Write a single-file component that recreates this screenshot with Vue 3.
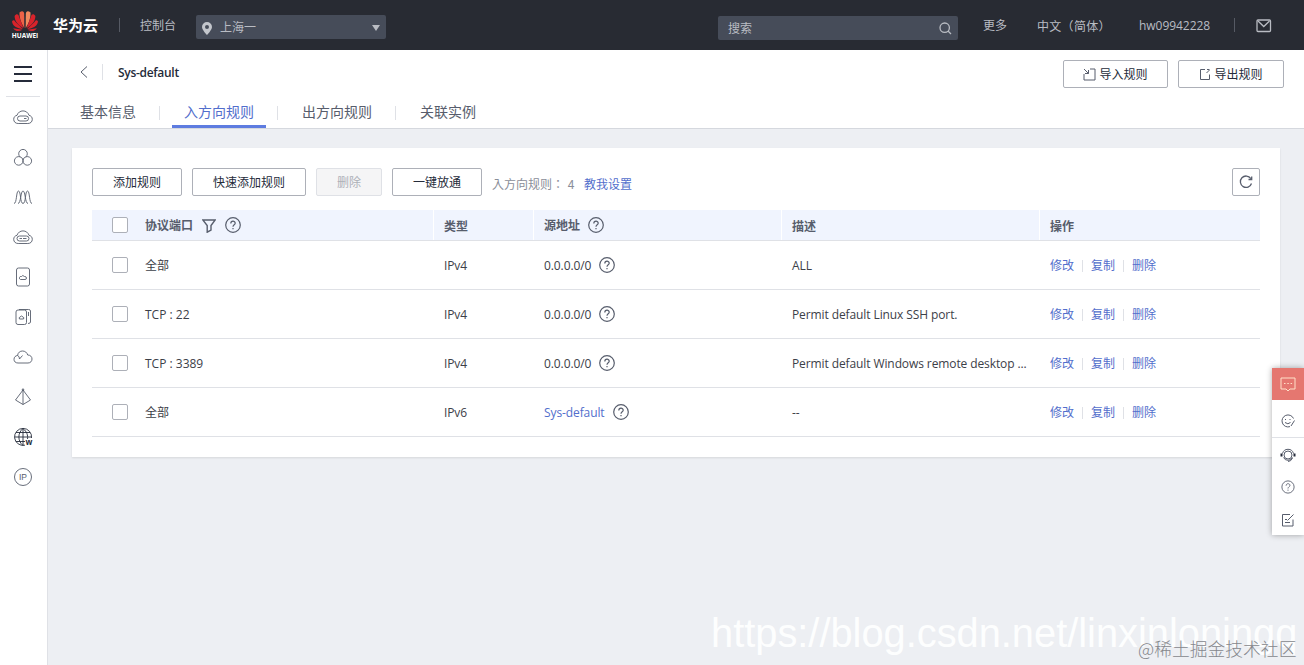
<script setup>
import { ref } from 'vue'

const tabs = ['基本信息', '入方向规则', '出方向规则', '关联实例']
const activeTab = ref(1)
const selected = ref([])

const rules = [
  { port: '全部', type: 'IPv4', source: '0.0.0.0/0', desc: 'ALL' },
  { port: 'TCP : 22', type: 'IPv4', source: '0.0.0.0/0', desc: 'Permit default Linux SSH port.' },
  { port: 'TCP : 3389', type: 'IPv4', source: '0.0.0.0/0', desc: 'Permit default Windows remote desktop ...' },
  { port: '全部', type: 'IPv6', source: 'Sys-default', link: true, desc: '--' },
]
const actions = ['修改', '复制', '删除']

const cloud = 'M5.2 16.5C2.5 16.5.7 14.8.7 12.300.7 10.200 2 8.700 4 8.300 5 5.500 7.200 3.900 10 3.900S15 5.500 16 8.300C18 8.700 19.300 10.200 19.300 12.300 19.300 14.800 17.500 16.500 14.800 16.500Z'
const sideIcons = [
  [cloud, 'M7 9H13Q15.500 9 15.500 11.500T13 14H7Q4.500 14 4.500 11.500T7 9M11 11.500H13.500'],
  ['M7 9.800A4.300 4.300 0 1 1 13 9.800M10 13.800A4.300 4.300 0 1 1 7 9.800Q10 10.500 10 13.800M13 9.800A4.300 4.300 0 1 1 10 13.800Q10 10.500 13 9.800'],
  ['M1 16.500C4 16.500 3 4 5.500 4S7 16.500 10 16.500 12 4 14.500 4 16 16.500 19 16.500', 'M5 16.500C8 16.500 7.500 4 10 4S12 16.500 15 16.500'],
  [cloud, 'M6.500 9H13.500Q16 9 16 11.500T13.500 14H6.500Q4 14 4 11.500T6.500 9M6.500 11.500H9M10 11.500H13.500'],
  ['M5.500 1H14.500Q16.500 1 16.500 3V17Q16.500 19 14.500 19H5.500Q3.500 19 3.500 17V3Q3.500 1 5.500 1', 'M7.500 12.500Q6 12 6.500 10.500T8.500 9.500Q9.500 7.500 11.500 9.500 13.500 9.500 13.500 11T12 12.500Z'],
  ['M5 3H11.500Q13.500 3 13.500 5V15.500Q13.500 17.500 11.500 17.500H5Q3 17.500 3 15.500V5Q3 3 5 3', 'M6.500 12Q5.500 10.500 7 10 8.500 8 10 10 11.500 10.500 10.500 12ZM6 2.500H15.500Q17.500 2.500 17.500 4V15Q17.500 16.500 15 16.500M15.500 5V9'],
  ['M5 16C2.500 16 1 14.500 1 12.300S2.500 8.700 4.500 8.500C5 5.500 7 4 9.500 4S14 5.500 14.700 8C17.500 8 19 9.800 19 12S17.500 16 15 16Z', 'M4.500 8.500Q6.500 9 6.500 12L9.500 8.500'],
  ['M10 3 2.500 13 10 17.500 17.500 13ZM10 3V17.500', 'M9.300 2H10.700V3.500H9.300Z'],
]
</script>

<template>
  <div class="page">
    <header class="topbar">
      <div class="logo">
        <svg width="28" height="22" viewBox="0 0 28 22">
          <g fill="#d9232b">
            <path d="M13.300 18C9.500 12 8.300 7 8.500 2.500 11 .5 13 1 13.200 4Z" fill="#ee6247" />
            <path d="M14.700 18C18.500 12 19.700 7 19.500 2.500 17 .5 15 1 14.800 4Z" fill="#f28b5f" />
            <path d="M12.500 18.300C7 15 3.500 11 3.600 6 5 3.800 7.500 3.700 8 6.500Z" />
            <path d="M15.500 18.300C21 15 24.500 11 24.400 6 23 3.800 20.500 3.700 20 6.500Z" />
            <path d="M11.800 19C6 18.500 1.500 16 1 11.500 2 9.500 3.500 10 4.500 12Z" />
            <path d="M16.200 19C22 18.500 26.500 16 27 11.500 26 9.500 24.500 10 23.500 12Z" />
            <path d="M11.500 19.700C8 22 4 21.500 2.200 18.300Z" />
            <path d="M16.500 19.700C20 22 24 21.500 25.800 18.300Z" />
          </g>
        </svg>
        <b>HUAWEI</b>
      </div>
      <strong class="brand">华为云</strong>
      <i class="bar"></i>
      <span class="console">控制台</span>
      <div class="region">
        <svg width="10" height="13" viewBox="0 0 10 13"><path d="M5 0A5 5 0 0 0 0 5C0 8 5 13 5 13S10 8 10 5A5 5 0 0 0 5 0M5 3A2 2 0 1 1 5 7 2 2 0 1 1 5 3" fill="#c3c6cc" fill-rule="evenodd" /></svg>
        <span>上海一</span>
        <i class="caret"></i>
      </div>
      <div class="search">
        <span>搜索</span>
        <svg width="13" height="13" viewBox="0 0 13 13" class="line"><circle cx="5.700" cy="5.700" r="4.700" /><path d="M9 9 12 12" /></svg>
      </div>
      <span class="more">更多</span>
      <span class="lang">中文（简体）</span>
      <span class="user">hw09942228</span>
      <i class="bar bar-user"></i>
      <svg width="16" height="14" viewBox="0 0 16 14" class="line mail"><rect x="1" y="1" width="13.500" height="11.500" rx="1" /><path d="M2 2 7.750 7.500 13.500 2" /></svg>
    </header>

    <div class="body">
      <aside class="sidebar">
        <div class="burger"><i></i><i></i><i></i></div>
        <div v-for="(paths, i) in sideIcons" :key="i" class="side-item">
          <svg width="20" height="20" viewBox="0 0 20 20"><path v-for="d in paths" :key="d" :d="d" /></svg>
        </div>
        <div class="side-item">
          <svg class="globe" width="20" height="20" viewBox="0 0 20 20">
            <path d="M12 18.200A8.500 8.500 0 1 1 18.500 11M10 1.500V18.500M1.500 10H18.500M3 5.500H17M3 14.500H12M10 1.500C4.500 6 4.500 14 10 18.500M10 1.500C14 5 15 8 14.500 12" />
            <text x="12.500" y="18" class="globe-w">w</text>
          </svg>
        </div>
        <div class="side-item">
          <svg width="20" height="20" viewBox="0 0 20 20"><circle cx="10" cy="10" r="8.500" /><text x="10" y="13" text-anchor="middle" class="ip">IP</text></svg>
        </div>
      </aside>

      <main class="main">
        <div class="heading">
          <div class="title-row">
            <svg class="back" width="8" height="12" viewBox="0 0 8 12"><path d="M7 .5 1 6 7 11.500" /></svg>
            <i class="divider"></i>
            <h1>Sys-default</h1>
            <button class="btn io import">
              <svg width="13" height="13" viewBox="0 0 13 13"><path d="M1 6V12H12V1H7M1 1 5.500 5.500M5.500 2V5.500H2" /></svg>导入规则
            </button>
            <button class="btn io">
              <svg width="12" height="13" viewBox="0 0 12 13"><path d="M6 1.500H1.500V11.500H10.500V6.500M7.500 5 10.500 2M8 1.500H10.500" /></svg>导出规则
            </button>
          </div>
          <nav class="tabs">
            <a v-for="(tab, i) in tabs" :key="tab" :class="{ active: i === activeTab }" @click="activeTab = i"><span>{{ tab }}</span></a>
          </nav>
        </div>

        <section class="card">
          <div class="toolbar">
            <button class="btn">添加规则</button>
            <button class="btn wide">快速添加规则</button>
            <button class="btn small" disabled>删除</button>
            <button class="btn">一键放通</button>
            <span class="count">入方向规则： 4</span>
            <a class="teach">教我设置</a>
            <button class="btn refresh">
              <svg width="14" height="14" viewBox="0 0 14 14"><path d="M12.500 8.500A5.700 5.700 0 1 1 11.800 3.500M12.700 1.500V4.500H9.500" /></svg>
            </button>
          </div>

          <div class="row head">
            <div class="check"><i></i></div>
            <div class="cell port">协议端口
              <svg class="funnel" width="14" height="14" viewBox="0 0 14 14"><path d="M.8 1H13.200L9 6.500V11L5.200 13.200V6.500Z" /></svg>
              <span class="help"><svg viewBox="0 0 16 16"><circle cx="8" cy="8" r="7.300" /><path d="M5.800 6.500C5.800 3.500 10.200 3.500 10.200 6.200 10.200 7.800 8 7.800 8 9.700M8 11V12.300" /></svg></span>
            </div>
            <div class="cell low">类型</div>
            <div class="cell">源地址
              <span class="help"><svg viewBox="0 0 16 16"><circle cx="8" cy="8" r="7.300" /><path d="M5.800 6.500C5.800 3.500 10.200 3.500 10.200 6.200 10.200 7.800 8 7.800 8 9.700M8 11V12.300" /></svg></span>
            </div>
            <div class="cell low">描述</div>
            <div class="cell low">操作</div>
          </div>
          <div v-for="(rule, i) in rules" :key="i" class="row">
            <label class="check"><input v-model="selected" type="checkbox" :value="i" /><i></i></label>
            <div class="cell port">{{ rule.port }}</div>
            <div class="cell narrow">{{ rule.type }}</div>
            <div class="cell narrow"><span :class="{ link: rule.link }">{{ rule.source }}</span>
              <span class="help"><svg viewBox="0 0 16 16"><circle cx="8" cy="8" r="7.300" /><path d="M5.800 6.500C5.800 3.500 10.200 3.500 10.200 6.200 10.200 7.800 8 7.800 8 9.700M8 11V12.300" /></svg></span>
            </div>
            <div class="cell narrow">{{ rule.desc }}</div>
            <div class="cell actions"><a v-for="action in actions" :key="action">{{ action }}</a></div>
          </div>
        </section>
      </main>
    </div>

    <div class="float-menu">
      <div class="chat"><svg width="16" height="15" viewBox="0 0 16 15"><path d="M1 1H15V12H10L8 14 6 12H1ZM4 6.500H5.500M7.300 6.500H8.800M10.600 6.500H12.100" /></svg></div>
      <div class="smile"><svg width="14" height="14" viewBox="0 0 14 14"><path d="M12.500 4.500A6 6 0 1 0 9 12.600M4.500 5V6M9 5V6M4 8.500Q7 11 9.500 8.500M13.500 6.500 10 12" /></svg></div>
      <div class="agent"><svg width="16" height="14" viewBox="0 0 16 14"><path d="M2.500 5.500A5.700 5.700 0 0 1 13.500 5.500M3.500 9.500A5 5 0 0 0 12.500 9.500M12.500 10Q11 13.500 8 13.500" /><circle cx="8" cy="7" r="4" /><path d="M1.500 5.500V8.500M14.500 5.500V8.500" class="ears" /></svg></div>
      <div class="faq"><svg width="14" height="14" viewBox="0 0 16 16"><circle cx="8" cy="8" r="7" /><path d="M5.800 6.500C5.800 3.500 10.200 3.500 10.200 6.200 10.200 7.800 8 7.800 8 9.700M8 11V12.300" /></svg></div>
      <div class="note"><svg width="14" height="14" viewBox="0 0 14 14"><path d="M9 1.500H1.500V13H12V6.500M4 6.500H6M4 9.500H9M6.500 7.500 12.500 1.500" /></svg></div>
    </div>

    <div class="blog-mark">https://blog.csdn.net/linxinloningq</div>
    <div class="site-mark">@稀土掘金技术社区</div>
  </div>
</template>

<style>
body {
  margin: 0;
  overflow: hidden;
}
</style>

<style scoped>
.page {
  position: relative;
  width: 1304px;
  height: 665px;
  display: flex;
  flex-direction: column;
  overflow: hidden;
  background: #edeff3;
  color: #3c4048;
  font: 12px/18px "Open Sans", "Noto Sans CJK SC", sans-serif;
}

* {
  box-sizing: border-box;
}

svg {
  flex: none;
  fill: none;
  stroke: #575d6c;
}

.topbar {
  flex: none;
  display: flex;
  align-items: center;
  height: 50px;
  background: #282b33;
  color: #b9bcc3;

  span {
    padding-top: 2px;
  }

  .logo {
    width: 28px;
    margin: -2px 0 0 11px;
    display: flex;
    flex-direction: column;
    align-items: center;

    b {
      color: #fff;
      font: bold 6.500px/7px "Open Sans", sans-serif;
    }

    svg {
      stroke: none;
    }
  }

  .brand {
    width: 46px;
    margin: -1px 0 0 14px;
    color: #fff;
    font-size: 15px;
    white-space: nowrap;
  }

  .bar {
    width: 1px;
    height: 14px;
    margin-left: 20px;
    background: #565a64;
  }

  .console {
    width: 56px;
    margin-left: 20px;
  }

  .region,
  .search {
    display: flex;
    align-items: center;
    background: #464c59;
    border-radius: 2px;
  }

  .region {
    width: 190px;
    height: 24px;
    margin-top: 4px;
    padding: 0 6px;
    gap: 8px;

    svg {
      margin-top: 2px;
      stroke: none;
    }
  }

  .caret {
    margin: 2px 0 0 auto;
    border: 4px solid transparent;
    border-top: 6px solid #b9bcc3;
    border-bottom: 0;
  }

  .search {
    width: 240px;
    height: 24px;
    margin: 6px 0 0 332px;
    padding: 0 6px 0 10px;
    justify-content: space-between;
  }

  .line {
    stroke: #b9bcc3;
    stroke-width: 1.300;
  }

  .more {
    margin-left: 25px;
  }

  .lang {
    width: 78px;
    margin-left: 30px;
    font-family: "Noto Sans CJK TC", sans-serif;
    letter-spacing: 0.3px;
    white-space: nowrap;
  }

  .user {
    width: 71px;
    margin-left: 24px;
    letter-spacing: -0.05px;
  }

  .bar-user {
    margin-left: 24px;
  }

  .mail {
    margin: 1px 0 0 21px;
  }
}

.body {
  flex: 1;
  display: flex;
  min-height: 0;
}

.sidebar {
  width: 48px;
  padding: 0 7px 0 6px;
  background: #fff;
  border-right: 1px solid #dfe1e6;

  .burger {
    height: 47px;
    padding: 16px 8px 0;
    border-bottom: 1px solid #dfe1e6;

    i {
      display: block;
      height: 2px;
      margin-bottom: 5px;
      background: #252b3a;
    }
  }

  .side-item {
    display: flex;
    align-items: center;
    justify-content: center;
    height: 40px;
  }

  svg {
    stroke-width: 0.900;
  }

  text {
    stroke: none;
    fill: #575d6c;
  }

  .globe {
    stroke: #252b3a;
  }

  .globe-w {
    font: bold 8px "Open Sans", sans-serif;
    fill: #252b3a;
  }

  .ip {
    font: 8.500px "Liberation Sans", sans-serif;
  }
}

.main {
  flex: 1;
}

.heading {
  height: 79px;
  padding-right: 20px;
  background: #fff;
  border-bottom: 1px solid #d5d8de;
}

.title-row {
  display: flex;
  align-items: center;
  height: 46px;

  .back {
    margin: -2px 0 0 32px;
  }

  .divider {
    width: 1px;
    height: 16px;
    margin: -2px 15px 0 14px;
    background: #dfe1e6;
  }

  h1 {
    margin: 0 auto 0 0;
    color: #252b3a;
    font-size: 12px;
    font-weight: 600;
    letter-spacing: -0.3px;
  }
}

.btn {
  display: flex;
  align-items: center;
  justify-content: center;
  width: 90px;
  height: 28px;
  margin: 0 10px 0 0;
  padding: 2px 0 0;
  border: 1px solid #adb0b8;
  border-radius: 2px;
  background: #fff;
  color: #252b3a;
  font: inherit;

  &.wide {
    width: 114px;
  }

  &.small {
    width: 66px;
  }

  &:disabled {
    border-color: #dfe1e6;
    background: #f5f5f6;
    color: #adb0b8;
  }

  &.io {
    width: 106px;
    margin: 2px 0 0 10px;
    gap: 3px;

    svg {
      margin-top: -2px;
    }
  }

  &.import {
    width: 105px;
  }

  &.refresh {
    width: 28px;
    margin: 0 0 0 auto;
    padding: 0;

    svg {
      stroke-width: 1.300;
    }
  }
}

.tabs {
  display: flex;
  height: 32px;
  padding-left: 20px;
  font-size: 14px;
  line-height: 32px;

  a {
    display: flex;
    position: relative;
    padding: 0 12px;
    color: #575d6c;
  }

  a + a {
    margin-left: 24px;
  }

  /* thin separator between neighbouring tabs */
  a + a::before {
    content: "";
    position: absolute;
    left: -13px;
    top: 10px;
    width: 1px;
    height: 14px;
    background: #dfe1e6;
  }

  .active {
    color: #526ecc;
    border-bottom: 3px solid #5e7ce0;
  }
}

.card {
  width: 1208px;
  height: 309px;
  margin: 19px 0 0 24px;
  padding: 20px;
  background: #fff;
  box-shadow: 0 1px 2px #0000001a;
}

.toolbar {
  display: flex;
  height: 42px;

  .teach {
    margin-top: 8px;
  }

  .count {
    width: 92px;
    margin-top: 7px;
    color: #8a8e99;
    font-family: "Noto Sans CJK TC", sans-serif;
    word-spacing: 1px;
    white-space: nowrap;
  }
}

.teach,
.link,
.actions a {
  color: #526ecc;
}

.row {
  display: grid;
  grid-template-columns: 43px 298px 100px 248px 258px 1fr;
  align-items: center;
  height: 49px;
  border-bottom: 1px solid #dfe1e6;
}

.check {
  padding-left: 20px;

  input {
    display: none;
  }

  i {
    display: block;
    width: 16px;
    height: 16px;
    border: 1px solid #adb0b8;
    border-radius: 2px;
    background: #fff;
  }

  input:checked + i {
    background: #5e7ce0;
  }
}

.cell {
  display: flex;
  align-items: center;
  padding: 2px 0 0 11px;
  white-space: nowrap;

  &.port {
    padding-left: 10px;
  }

  &.narrow {
    letter-spacing: -0.1px;
  }
}

.head {
  height: 31px;
  background: #f0f4fe;
  color: #575d6c;
  font-weight: bold;

  .cell {
    height: 30px;
    border-left: 1px solid #fff;
    padding: 1px 0 0 10px;
  }

  .port {
    border: 0;
  }

  .low {
    padding-top: 3px;
  }
}

.funnel {
  margin-left: 9px;
  stroke-width: 1.400;
}

.help {
  width: 16px;
  height: 16px;
  margin: -2px 0 0 8px;

  svg {
    display: block;
    width: 16px;
    height: 16px;
    stroke-width: 1.200;
  }
}

.funnel + .help {
  margin-left: 9px;
}

.actions a + a {
  margin-left: 8px;
  padding-left: 9px;
  background: linear-gradient(#dfe1e6, #dfe1e6) 0 3px / 1px 12px no-repeat;
}

.float-menu {
  position: absolute;
  right: 0;
  top: 368px;
  width: 32px;
  height: 167px;
  background: #fff;
  box-shadow: 0 0 6px #00000055;

  div {
    display: flex;
    align-items: center;
    justify-content: center;
    height: 33px;
  }

  .chat {
    height: 32px;
    background: #e57770;

    svg {
      stroke: #ffe2c9;
    }
  }

  .smile {
    height: 38px;
    padding-top: 5px;
    border-bottom: 1px solid #dfe1e6;
  }

  .faq,
  .note {
    padding-bottom: 2px;
  }

  .ears {
    stroke: #252b3a;
    stroke-width: 2;
  }
}

.blog-mark {
  position: absolute;
  left: 711px;
  top: 611px;
  color: #fffffff0;
  font: 39.800px/44px "Liberation Sans", sans-serif;
  white-space: nowrap;
}

.site-mark {
  position: absolute;
  left: 1138px;
  top: 636px;
  color: #85878c;
  font: 300 17.800px/24px "Noto Sans CJK SC", sans-serif;
  white-space: nowrap;
}
</style>
